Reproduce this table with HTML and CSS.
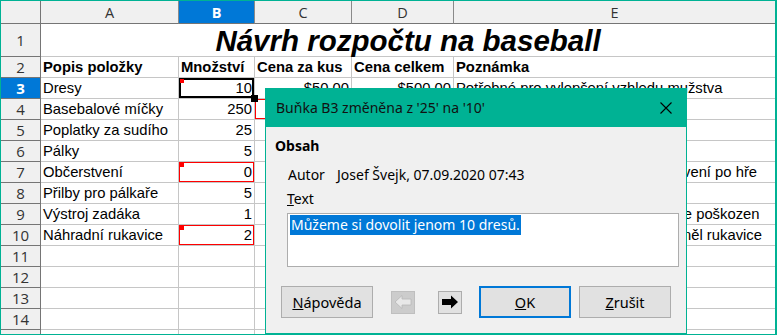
FILE: index.html
```html
<!DOCTYPE html>
<html lang="cs">
<head>
<meta charset="utf-8">
<link rel="stylesheet" href="styles.css">
</head>
<body>
<div class="frame">
  <div class="sheet">
    <div class="hdr corner"></div>
    <div class="hdr col">A</div>
    <div class="hdr col sel">B</div>
    <div class="hdr col">C</div>
    <div class="hdr col">D</div>
    <div class="hdr col">E</div>

    <div class="hdr row r1">1</div>
    <div class="cell title">Návrh rozpočtu na baseball</div>

    <div class="hdr row">2</div>
    <div class="cell b">Popis položky</div>
    <div class="cell b">Množství</div>
    <div class="cell b">Cena za kus</div>
    <div class="cell b">Cena celkem</div>
    <div class="cell b">Poznámka</div>

    <div class="hdr row sel">3</div>
    <div class="cell">Dresy</div>
    <div class="cell num cur"><span class="mark"></span>10<span class="handle"></span></div>
    <div class="cell num">$50.00</div>
    <div class="cell num">$500.00</div>
    <div class="cell ov">Potřebné pro vylepšení vzhledu mužstva</div>

    <div class="hdr row">4</div>
    <div class="cell">Basebalové míčky</div>
    <div class="cell num">250</div>
    <div class="cell num chg"></div>
    <div class="cell"></div>
    <div class="cell"></div>

    <div class="hdr row">5</div>
    <div class="cell">Poplatky za sudího</div>
    <div class="cell num">25</div>
    <div class="cell"></div>
    <div class="cell"></div>
    <div class="cell"></div>

    <div class="hdr row">6</div>
    <div class="cell">Pálky</div>
    <div class="cell num">5</div>
    <div class="cell"></div>
    <div class="cell"></div>
    <div class="cell"></div>

    <div class="hdr row">7</div>
    <div class="cell">Občerstvení</div>
    <div class="cell num chg"><span class="mark"></span>0</div>
    <div class="cell"></div>
    <div class="cell"></div>
    <div class="cell ov">Jídlo a pití pro naše hráče, občerstvení po hře</div>

    <div class="hdr row">8</div>
    <div class="cell">Přilby pro pálkaře</div>
    <div class="cell num">5</div>
    <div class="cell"></div>
    <div class="cell"></div>
    <div class="cell"></div>

    <div class="hdr row">9</div>
    <div class="cell">Výstroj zadáka</div>
    <div class="cell num">1</div>
    <div class="cell"></div>
    <div class="cell"></div>
    <div class="cell ov">Stávající ochranný výstroj zadáka je poškozen</div>

    <div class="hdr row">10</div>
    <div class="cell">Náhradní rukavice</div>
    <div class="cell num chg"><span class="mark"></span>2</div>
    <div class="cell"></div>
    <div class="cell"></div>
    <div class="cell ov">Pro případ, že některý hráč zapomněl rukavice</div>

    <div class="hdr row">11</div><div class="cell"></div><div class="cell"></div><div class="cell"></div><div class="cell"></div><div class="cell"></div>
    <div class="hdr row">12</div><div class="cell"></div><div class="cell"></div><div class="cell"></div><div class="cell"></div><div class="cell"></div>
    <div class="hdr row">13</div><div class="cell"></div><div class="cell"></div><div class="cell"></div><div class="cell"></div><div class="cell"></div>
    <div class="hdr row">14</div><div class="cell"></div><div class="cell"></div><div class="cell"></div><div class="cell"></div><div class="cell"></div>
    <div class="hdr row"></div><div class="cell"></div><div class="cell"></div><div class="cell"></div><div class="cell"></div><div class="cell"></div>
  </div>

  <div class="dialog">
    <div class="dlg-title">
      <span>Buňka B3 změněna z '25' na '10'</span>
      <svg class="close" width="12" height="12" viewBox="0 0 12 12"><path d="M0.5 0.5 L11.5 11.5 M11.5 0.5 L0.5 11.5" stroke="#000" stroke-width="1.1" fill="none"/></svg>
    </div>
    <div class="dlg-body">
      <div class="section">Obsah</div>
      <div class="author"><span class="lbl">Autor</span><span>Josef Švejk, 07.09.2020 07:43</span></div>
      <div class="textlbl"><u>T</u>ext</div>
      <div class="textbox"><span class="hl">Můžeme si dovolit jenom 10 dresů.</span></div>
      <div class="buttons">
        <div class="btn"><u>N</u>ápověda</div>
        <div class="arrow dis">
          <svg width="18" height="14" viewBox="0 0 18 14"><path d="M1 7 L8 0.5 L8 4 L17 4 L17 10 L8 10 L8 13.5 Z" fill="#e8e8e8" stroke="#b8b8b8" stroke-width="0.8"/></svg>
        </div>
        <div class="arrow">
          <svg width="18" height="14" viewBox="0 0 18 14"><path d="M17 7 L10 0.5 L10 4 L1 4 L1 10 L10 10 L10 13.5 Z" fill="#000"/></svg>
        </div>
        <div class="btn ok"><u>O</u>K</div>
        <div class="btn"><u>Z</u>rušit</div>
      </div>
    </div>
  </div>
</div>
</body>
</html>
```

FILE: styles.css
```css
* { box-sizing: border-box; }
html, body { margin: 0; padding: 0; background: #fff; }
body { width: 777px; height: 336px; overflow: hidden; }

.frame {
  position: relative;
  width: 777px;
  height: 335px;
  border: 1px solid #00b294;
  border-right-width: 2px;
  overflow: hidden;
  font-family: "Liberation Sans", Arial, sans-serif;
}

.sheet {
  display: grid;
  grid-template-columns: 40px 138px 76px 97px 102px 322px;
  grid-template-rows: 23px 33px repeat(14, 21px);
}

.hdr {
  background: #f0f0f0;
  color: #333;
  font-family: "Open Sans", "Liberation Sans", sans-serif;
  font-size: 14.5px;
  display: flex;
  align-items: center;
  justify-content: center;
  border-right: 1px solid #757575;
  border-bottom: 1px solid #757575;
}
.hdr.col { border-right-color: #8a8a8a; }
.hdr.col:last-child { border-right: none; }
.hdr.row { font-size: 15px; }
.hdr.sel { background: #0078d7; color: #fff; font-weight: bold; }

.cell {
  position: relative;
  border-right: 1px solid #c6c6c6;
  border-bottom: 1px solid #c6c6c6;
  font-size: 14.8px;
  color: #000;
  padding: 0 2px;
  display: flex;
  align-items: center;
  white-space: nowrap;
}
.cell.b { font-weight: bold; }
.cell.num { justify-content: flex-end; }
.cell.ov { overflow: visible; padding-left: 2px; }

.title {
  grid-column: 2 / 7;
  justify-content: center;
  font-size: 29.5px;
  font-weight: bold;
  font-style: italic;
  padding-right: 2px;
  padding-top: 1px;
}

.cur { box-shadow: inset 0 0 0 2px #000; }
.chg { box-shadow: inset 0 0 0 1px #ff0000; }
.mark {
  position: absolute;
  left: 1px;
  top: 1px;
  width: 4px;
  height: 4px;
  background: #ff0000;
}
.handle {
  position: absolute;
  right: -4px;
  bottom: -4px;
  width: 7px;
  height: 7px;
  background: #000;
  z-index: 2;
}

.dialog {
  position: absolute;
  left: 264px;
  top: 87px;
  width: 422px;
  height: 246px;
  border: 1px solid #00b294;
  background: #f0f0f0;
  font-family: "Noto Sans", "Open Sans", sans-serif;
  color: #000;
  z-index: 5;
}
.dlg-title {
  height: 38px;
  background: #00b294;
  display: flex;
  align-items: center;
  justify-content: space-between;
  padding: 0 14px 1px 10px;
  font-size: 14px;
  color: #111;
}

.dlg-body {
  padding: 8px 7px 0 9px;
  font-size: 14px;
}
.section { font-weight: bold; height: 22px; line-height: 22px; }
.author { display: flex; height: 26px; align-items: center; padding-left: 13px; margin-top: 4px; }
.author .lbl { width: 49px; }
.textlbl { height: 24px; line-height: 24px; padding-left: 12px; }
.textbox {
  margin: 2px 0 0 12px;
  width: 392px;
  height: 54px;
  background: #fff;
  border: 1px solid #adadad;
  padding: 1px 2px;
  font-size: 14px;
  color: #fff;
}
.hl { background: #0078d7; color: #fff; line-height: 20px; display: inline-block; padding: 0 1px; }

.buttons {
  display: flex;
  align-items: center;
  margin-top: 19px;
  margin-left: 6px;
}
.btn {
  width: 92px;
  height: 32px;
  background: #e1e1e1;
  border: 1px solid #adadad;
  display: flex;
  align-items: center;
  justify-content: center;
  font-size: 14.5px;
}
.btn.ok { border: 2px solid #0078d7; margin-left: 17px; margin-right: 8px; }
.arrow {
  width: 24px;
  height: 23px;
  background: #e1e1e1;
  border: 1px solid #adadad;
  display: flex;
  align-items: center;
  justify-content: center;
}
.arrow.dis { background: #cccccc; border-color: #bfbfbf; margin-left: 18px; margin-right: 23px; }
```
